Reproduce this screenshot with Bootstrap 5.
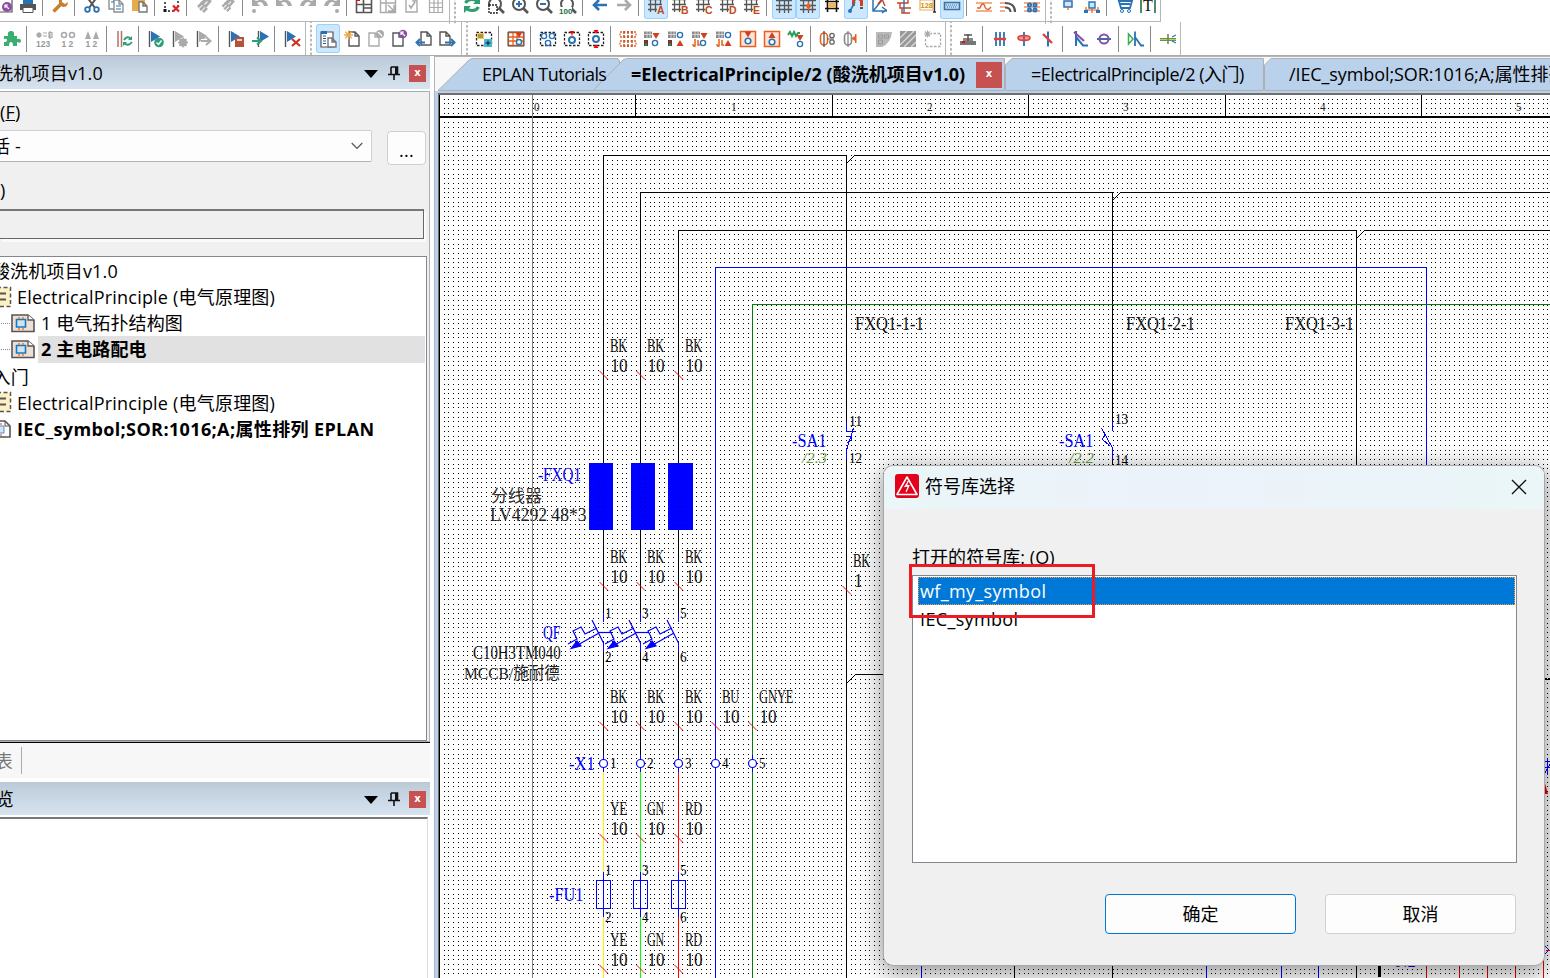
<!DOCTYPE html>
<html lang="zh-CN">
<head>
<meta charset="utf-8">
<title>EPLAN</title>
<meta name="viewport" content="width=device-width, initial-scale=1">
<link href="https://cdn.jsdelivr.net/npm/bootstrap@5.3.0/dist/css/bootstrap.min.css" rel="stylesheet">
<style>
body{font-family:"Open Sans","Noto Sans CJK SC",sans-serif;font-size:18px;line-height:26px;color:#000;background:#fff;letter-spacing:.2px}
.app{width:1550px;height:978px}
.bars{height:56px;border-bottom:1px solid #a9acab;background:#fff}
.tbar{height:34px;border-bottom:1px solid #b4b8b7;border-right:1px solid #b4b8b7;width:max-content}
.tbar.first{height:22px}
.tbar.first .cell,.tbar.first .tsep,.tbar.first .grip{margin-top:-10px}
.cell{width:24px;height:29px;margin-top:2px;padding-top:3px;flex:none}
.cell svg{display:block;width:24px;height:24px;overflow:visible}
.cell.on{background:#cce8ff;box-shadow:inset 0 0 0 1px #99d1ff;border-radius:3px}
.tsep{flex:none;height:26px;margin-top:4px;border-left:1px solid #8a8a8a;margin-left:2px;width:6px}
.grip{width:11px;margin-left:1px;border-left:1px solid #b4b8b7;height:34px;flex:none;background:radial-gradient(circle,#b5b5b5 1px,transparent 1.3px) 3px 2px/4px 4.6px repeat-y}
.main{height:922px}
.side{width:435px;border-right:1px solid #b4b4b4}
.ttl{height:33px;width:430px;background:linear-gradient(#bccad8,#d7e3f0)}
.clip{white-space:nowrap;overflow:hidden}
.xbtn{background:#c75050;color:#fff;font:bold 10px/15px "DejaVu Sans",sans-serif;width:17px;height:17px;text-align:center;letter-spacing:0;flex:none}
.pane{width:430px;background:#f0f0f0;border:1px solid #aaaeb2;border-left:0;margin-top:2px}
.combo{width:372px;height:32px;background:#fdfdfd;border:1px solid #d0d0d0;border-left:0;border-bottom-color:#b5b5b5;border-radius:0 2px 2px 0}
.dots{width:39px;height:34px;background:#fdfdfd;border:1px solid #cfcfcf;border-radius:4px;line-height:36px}
.sunk{width:424px;height:30px;border:1px solid #666;border-left:0;border-top:2px solid #777;box-shadow:2px 3px 0 #fafafa}
.tree{width:427px;height:485px;background:#fff;border:1px solid #828790;border-left:0}
.trow{height:26.4px;white-space:nowrap}
.trow svg{flex:none}
.tabs{height:37px;background:#f8f8f8}
.tabtxt{white-space:nowrap;height:34px;padding-top:5px;letter-spacing:.1px}
.tabtxt>*{flex:none}
.view{border-left:1px solid #6f6f6f;border-top:2px solid #6f6f6f;margin-left:3px;box-shadow:-3px 0 0 #b9d1ea;background:#fff}
.cad{display:block;box-shadow:inset 1px 0 0 #000}
.cad text{font-family:"Liberation Serif","Noto Sans CJK SC",serif;letter-spacing:0}
.dlg{left:884px;top:466px;width:660px;height:499px;background:#f0f0f0;border-radius:9px;box-shadow:0 0 0 1px #a8a8a8,0 5px 24px 2px rgba(0,0,0,.45)}
.dlghead{height:43px;background:linear-gradient(90deg,#eaf6f8,#ecf2fa 42%,#eaf6f8);border-radius:9px 9px 0 0}
.lst{width:605px;height:288px;background:#fff;border:1px solid #828790;margin-left:28px}
.pick{margin:1px 1px 0 5px;height:28px;background:#0078d7;color:#fff;outline:1px dotted #f0a040;outline-offset:-1px;padding:1px 0 0 2px}
.dbtn{width:191px;height:40px;border:1px solid #d0d0d0;background:#fdfdfd;border-radius:4px;font-size:18px;line-height:38px;text-align:center;letter-spacing:0}
.dbtn.ok{border-color:#0078d4}
.mark-red{left:25px;top:98px;width:186px;height:54px;border:3px solid #ed1c24}
</style>
</head>
<body class="overflow-hidden">
<div class="app d-flex flex-column overflow-hidden position-relative">
  <header class="bars overflow-hidden">
    <div class="tbar first d-flex" id="bar1"></div>
    <div class="tbar d-flex" id="bar2"></div>
  </header>
  <div class="main d-flex">
    <aside class="side d-flex flex-column flex-shrink-0">
      <div class="ttl d-flex align-items-center justify-content-between">
        <div class="clip d-flex justify-content-end" style="width:103px"><span>酸洗机项目v1.0</span></div>
        <div class="d-flex align-items-center tools"></div>
      </div>
      <div class="pane d-flex flex-column" style="height:651px">
        <div style="padding:7px 0 5px">(<u>F</u>)</div>
        <div class="d-flex">
          <div class="combo d-flex align-items-center justify-content-between pe-2">
            <div class="clip d-flex justify-content-end" style="width:21px"><span>激活 -</span></div>
            <svg width="12" height="8" viewBox="0 0 12 8"><path d="M.7 1 6 6.5 11.3 1" fill="none" stroke="#555" stroke-width="1.2"/></svg>
          </div>
          <div class="dots text-center" style="margin:1px 0 0 15px">...</div>
        </div>
        <div style="padding:12px 0 5px;height:44px">)</div>
        <div class="sunk mb-3 mt-0"></div>
        <div class="tree" style="margin-top:1px">
          <div class="trow d-flex"><div class="clip d-flex justify-content-end" style="width:118px;padding-top:1px"><span>酸洗机项目v1.0</span></div></div>
          <div class="trow d-flex align-items-center"><svg class="fold" width="17" height="22" viewBox="0 0 17 22"></svg><span>ElectricalPrinciple (电气原理图)</span></div>
          <div class="trow d-flex align-items-center"><svg class="leaf" width="41" height="22" viewBox="0 0 41 22"></svg><span style="letter-spacing:.1px">1 电气拓扑结构图</span></div>
          <div class="trow d-flex align-items-center"><svg class="leaf" width="38" height="22" viewBox="0 0 38 22"></svg><b class="flex-grow-1" style="background:#e1e1e1;padding:0 0 1px 3px;margin-right:1px;letter-spacing:.1px">2 主电路配电</b></div>
          <div class="trow d-flex"><div class="clip d-flex justify-content-end" style="width:29px;padding-top:1px"><span>入门</span></div></div>
          <div class="trow d-flex align-items-center"><svg class="fold" width="17" height="22" viewBox="0 0 17 22"></svg><span style="padding-top:1px">ElectricalPrinciple (电气原理图)</span></div>
          <div class="trow d-flex align-items-center"><svg width="17" height="22" viewBox="0 0 17 22"><path d="M-3 3H5L10 8V19H-3" fill="#fff" stroke="#555" stroke-width="1.6"/><path d="M5 3V8H10" fill="none" stroke="#555"/><path d="M0 8H4V15H0" fill="#cde4f5" stroke="#5a8fc0"/><path d="M0 6H2M0 17H2" stroke="#e33"/></svg><b style="letter-spacing:.38px">IEC_symbol;SOR:1016;A;属性排列 EPLAN</b></div>
        </div>
      </div>
      <div style="height:36px;width:430px;background:#f7f7f7;border-top:1px solid #000;color:#777" class="d-flex align-items-center">
        <div class="clip d-flex justify-content-end" style="width:13px"><span>列表</span></div>
        <div style="width:9px;height:27px;border-right:1px solid #aaa"></div>
      </div>
      <div class="ttl d-flex align-items-center justify-content-between flex-shrink-0" style="margin-top:4px">
        <div class="clip d-flex justify-content-end" style="width:14px"><span>预览</span></div>
        <div class="d-flex align-items-center tools"></div>
      </div>
      <div class="pane bg-white flex-grow-1" style="border-top:2px solid #777;border-bottom:0;width:428px;border-right-color:#ddd"></div>
    </aside>
    <section class="flex-grow-1 overflow-hidden">
      <div class="tabs position-relative">
        <svg class="position-absolute top-0 start-0" width="1115" height="37" viewBox="435 56 1115 37">
          <path d="M435 56.5H1550" stroke="#b4b4b4"/>
          <g fill="#b9d1ea" stroke="#b0b0b0">
            <path d="M438 90.5 469 60Q471 58.5 473 58.5H617Q619.500 58.500 619.500 63V90.500Z"/>
            <path d="M593 90.500 623 60Q625 58.500 628 58.500H1004.500V90.500Z"/>
            <path d="M1005.500 90.500V65L1012 58.500H1263.500V90.500Z"/>
            <path d="M1264.500 90.500V65L1271 58.500H1552V90.500Z"/>
          </g>
          <path d="M435 92H1550" stroke="#b9d1ea" stroke-width="2"/>
        </svg>
        <div class="tabtxt d-flex position-relative">
          <span style="width:149px;margin-left:47px;letter-spacing:-.58px">EPLAN Tutorials</span>
          <b style="width:345px;letter-spacing:.05px">=ElectricalPrinciple/2 (酸洗机项目v1.0)</b>
          <span class="xbtn" style="width:26px;height:26px;line-height:24px;margin-top:1px">x</span>
          <span style="margin-left:29px;width:258px;letter-spacing:-.48px">=ElectricalPrinciple/2 (入门)</span>
          <span style="letter-spacing:-.1px">/IEC_symbol;SOR:1016;A;属性排列</span>
        </div>
      </div>
      <div class="view">
        <svg class="cad" width="1111" height="883" viewBox="439 95 1111 883" id="cad"></svg>
      </div>
    </section>
  </div>

  <div class="dlg position-absolute">
    <div class="dlghead d-flex align-items-center">
      <svg width="24" height="24" viewBox="0 0 24 24" style="margin-left:11px;margin-right:6px;margin-top:-3px"><rect width="24" height="24" rx="3" fill="#e2001a"/><path d="M12 3 22 20.500H2Z" fill="none" stroke="#fff" stroke-width="1.600" stroke-linejoin="round"/><path d="M13.500 7 10 12.500 13.500 12 11 18M13 7 11.500 11.500 14 11.500 11.500 17" fill="none" stroke="#fff" stroke-width="1.100"/></svg>
      <span class="flex-grow-1" style="margin-top:-3px;letter-spacing:0">符号库选择</span>
      <svg width="16" height="16" viewBox="0 0 16 16" style="margin:-2px 17px 0 0"><path d="M1 1 15 15M15 1 1 15" stroke="#111" stroke-width="1.400"/></svg>
    </div>
    <div style="margin:35px 0 0 28px;height:31px;letter-spacing:.05px">打开的符号库: (O)</div>
    <div class="lst">
      <div class="pick" style="letter-spacing:.35px">wf_my_symbol</div>
      <div style="padding:1px 0 0 7px;letter-spacing:.35px">IEC_symbol</div>
    </div>
    <div class="d-flex" style="margin:31px 0 0 221px">
      <div class="dbtn ok">确定</div>
      <div class="dbtn" style="margin-left:29px">取消</div>
    </div>
    <div class="mark-red position-absolute"></div>
  </div>
</div>

<script>
// ---------- icon helpers (24 x 24 cells) ----------
const P=(d,s,w=1.5,f='none')=>`<path d="${d}" stroke="${s}" stroke-width="${w}" fill="${f}"/>`;
const F=(d,f)=>`<path d="${d}" fill="${f}"/>`;
const C=(x,y,r,s,w=1.5,f='none')=>`<circle cx="${x}" cy="${y}" r="${r}" stroke="${s}" stroke-width="${w}" fill="${f}"/>`;
const T=(x,y,t,c,z=8)=>`<text x="${x}" y="${y}" font-size="${z}" font-weight="700" font-family="Liberation Sans,sans-serif" letter-spacing="0" fill="${c}">${t}</text>`;
const D='#555',G='#aaa',B='#2a72b5',R='#d04020',O='#e8601c',N='#2e9e78',U='#8a4f9e',Y='#e8ab4c';
const doc=(x,y,c,w=10,h=13)=>P(`M${x} ${y}h${w-4}l4 4v${h-4}h${-w}zM${x+w-4} ${y}v4h4`,c,1.4,'#fff');
const box=c=>`<path d="M4.500 5.500h15v13h-15z" fill="none" stroke="${c}" stroke-width="1.300" stroke-dasharray="2.500 1.500"/>`;
const grid=P('M4 6.500H18M4 11.500H18M4 16.500H13M6.500 4V19M11.500 4V19M16.500 4V11',D,1.3);
const lens=P('M15 15 20 20',D,2.600)+C(11,11,6,D,2);
const undo=f=>`<g${f?' transform="matrix(-1 0 0 1 24 0)"':''}>`+F('M4 5V13H12L9 10Q14 7 16 13H20Q18 4 8 8Z',G)+'</g>';
const flag=(c,a)=>P('M5.500 4V20',D,1.4)+F('M7 4 16 9.500 7 15Z',c)+a;
const brush=P('M8 17 12 13M11 19 15 15M6 14 10 10',G,2.500)+F('M8 10 14 4 20 8 14 15Z',G)+F('M12 11 15 8 16 9 13 12Z','#eee');
const ring=(x,y)=>C(x,y,2.600,B,1.400);
const wave=P('M4 10H20M4 18H20',O,1.2);

const row1=[
 P('M4 4H20V19H4Z',D,1.2)+C(15,14,5,U,0,U)+P('M17 16 13 12M13 15V12H16','#fff',1.2),
 F('M7 6H17V11H7Z',B)+F('M4 11H20V17H4Z',D)+F('M7 15H17V20H7Z','#fff')+P('M7 15V19.500H17V15',D,1),'|',
 P('M5.500 18.500 13 11',' #c8812f',3.600)+F('M11 6 14 5V9L17 11 20 9Q20 14 15 14L11 12Z','#c8812f'),'|',
 P('M7 4 15 15M17 4 9 15',D,2)+C(7.500,16.500,2.300,B,1.800)+C(16.500,16.500,2.300,B,1.800),
 doc(5,4,'#8b9099',9,12)+doc(10,7,'#8b9099',9,12)+P('M7 9H10M12 13H17M12 16H17',B,1.2),
 F('M4 4H17V18H4Z',Y)+doc(11,9,'#777',8,10),'|',
 `<path d="M5 5H18V14M5 5V18H13" fill="none" stroke="#111" stroke-dasharray="2 2" stroke-width="1.400"/>`+F('M3.500 16h3v3h-3z','#111')+P('M13 12.500 19 18.500M19 12.500 13 18.500','#d22',2.200),'|',
 brush,`<g transform="translate(1 1) scale(.9)">${brush}</g>`,'|',
 undo(0)+C(6,18,2,G,0,G),undo(0),undo(1),undo(1)+C(17,18,2,G,0,G),'|',
 P('M4.500 5.500H19.500V19.500H4.500ZM4.500 11.500H19.500M11.500 5.500V19.500M11.500 15H19.500',D,1.6,'#fff')+F('M4 4H8V8H4Z','red'),
 P('M4.500 5.500H19.500V19.500H4.500ZM4.500 10H19.500M10 5.500V19.500M12 12 18 18M18 12V18H12',G,1.4),
 doc(6,4,G,11,15)+P('M9 12 11 15 15 9',G,1.6),
 P('M5.500 5.500H18.500V19.500H5.500ZM5.500 10H18.500M5.500 14.500H18.500M10 5.500V19.500M14 5.500V19.500',G,1.2),'#',
 P('M5.500 10A7 6 0 0 1 18 9.500M18.500 14A7 6 0 0 1 6 14.500','#2f9e70',3)+F('M13 11H20V4ZM11 13H4V20Z','#2f9e70'),
 lens+P('M5 12H13V20H5Z','#222',1.4,'#fff').replace('/>',' stroke-dasharray="2 1"/>'),
 lens+P('M8 11H14M11 8V14',B,2),lens+P('M8 11H14',B,2),lens+F('M3 14H16V21H3Z','#fff')+T(3,20.500,'100','#207040',8),'|',
 P('M19 12H7M11 7 6 12 11 17',B,2.600),P('M5 12H17M13 7 18 12 13 17',G,2.600),'|',
 ...['A','B','C','D','E'].map((l,i)=>[grid+T(13,20.500,l,'#c04a20',10.5),i==0]),'|',
 [P('M4 7.500H20M4 12.500H20M4 16.500H20M7.500 4V20M12.500 4V20M16.500 4V20',D,1.3),1],
 [P('M4 7.500H20M4 12.500H20M4 16.500H20M7.500 4V20M12.500 4V20M16.500 4V20',D,1.3)+C(12.500,13,2,O,1,O)+P('M12.500 9V17',O,1),1],
 P('M7.500 4V19M16.500 4V19M5 8.500H19M5 15.500H19','#111',1.6)+F('M8.500 9.500h7v5h-7z','#f3b850'),
 [P('M9.5 13V8Q13 2 17.5 8V13',R,3)+P('M6 18 11 9',B,1.6)+C(6,18,2,B,0,B)+P('M16 15H19',D,2),1],
 P('M5 5V18H19M6 17 14 7M14 14 18 17 14 20',B,1.5)+P('M10 11 14 6 17 13',R,1.4),
 P('M8 6H16V10H5M8 10V15H19M10 15V20H18',R,1.4)+P('M12 6V20',B,1.4),
 P('M4 7H17V17H4Z','#e8b35a',1.2,'#fff')+T(4.500,15,'128','#d98a10',7.500)+P('M17 5H20M18.500 5V19M17 19H20','#333',1.3),
 [P('M4.500 9.500H19.500V16.500H4.500Z','#3f6f9f',1.600,'#bcdcf6')+P('M6 12H18M7 14H17','#3f6f9f',1).replace('/>',' stroke-dasharray="1 1"/>'),1],'|',
 P('M5 15H8Q11 7 13 14Q15 19 19 14',O,1.4)+wave,P('M4 10H9M4 14H9M4 18H9',O,1.2)+P('M9 10Q19 10 19 19M9 14.500Q14.500 14.500 14.500 19',D,2.2),P('M4 10H20M4 14H20M4 18H20',O,1.2)+C(9.500,12,1.5,B,2)+C(15,12,1.5,B,2)+C(9.500,17,1.5,B,2)+C(15,17,1.5,B,2),'#',
 P('M8 8H16V14H8Z',B,1.5,'#cfe6f8')+P('M12 5V8M12 14V17',O,1.3),
 P('M9 9H15V15H9Z',B,1.4,'#cfe6f8')+P('M5 7V4M19 7V4M12 15V20M6 14V17H18V14',O,1.2)+F('M4 17h4v3h-4zM16 17h4v3h-4z',B),'|',
 P('M4 5H6L9 15H18L20 8H7M8 11H18M9 6H19',B,1.8)+C(10,18,1.500,B,1)+C(17,18,1.500,B,1),
 P('M5 4V20M19 4V20','#207040',1.6)+`<text x="7" y="18" font-size="16" letter-spacing="0" font-family="Liberation Serif" fill="#111">T</text>`
];
const tri=(x,y,u)=>F(u?`M${x-3.500} ${y+3}h7l-3.500 -6z`:`M${x-3.500} ${y-3}h7l-3.500 6z`,R);
const quad=a=>F('M4 4.500H12V11H4Z','#8a8a8a')+P('M4 7.500H12M7 4V11M10 4V11','#fff',.6)+(a?P('M7 12V19Q5 20 5 17M10 13V18H12',O,1.500):F('M4 13h4v6h-4z','#444')+F('M5 14h2v2h-2z','red')+F('M5 16.500h2v2h-2z','#2a4'));
const row2=[
 F('M4 9H8Q7 4 11 4T14 9H17V12Q21 11 21 14T17 15V19H13Q13 15 11 15T9 19H4V15Q7 15 7 13T4 12Z','#3aae72'),'|',
 C(7,8,2.200,G,1,G)+P('M11 6H15M11 9H15M18 4V12M17 5.500h3v5h-3z',G,1.2)+T(4,20,'123','#999',8.500),
 C(8,8,2.500,G,1.600)+C(16,8,2.500,G,1.600)+T(5.500,20,'1 2','#999',8.500),F('M5 12 8 4 11 12ZM13 12 16 4 19 12Z',G)+T(5.500,20,'1 2','#999',8.500),'|',
 P('M6 4V20M9.500 4V20','#b5706a',1.500)+P('M12 13Q15 8 19 12M20 15Q16 20 12 16',N,2)+F('M16 13H20V9ZM15 15H11V19Z',N),'|',
 flag(B,C(15,15.500,4.800,N,0,N)+P('M12.500 15.500 14.500 17.500 17.500 13.500','#fff',1.400)),
 flag(G,C(15,15.500,3,G,2,G)+P('M10 15.500H20M15 10.500V20.500M11.500 12 18.500 19M18.500 12 11.500 19',G,1.5)),flag(G,P('M9 14H18M14 10 18.500 14 14 18','#fff',4)+P('M9 14H18M14 10 18.500 14 14 18',G,2)),'|',
 flag(B,F('M11 10H20V20H11Z','#b5523c')+P('M13 13H18','#fff',1.500)),`<g transform="matrix(1 0 0 1 5 0)">${flag(B,'')}</g>`+P('M4 14H12M9 10.500 13 14 9 17.500',N,2),'|',
 flag(B,P('M12 12 20 19M20 12 12 19','#cc3020',2.200)),'#',
 [P('M5 5H17V20H5Z','#555',1.200,'#fff')+F('M5 4H11V7H5Z',B)+P('M7 9H10M7 11.500H10M7 14H10M7 16.500H10','#2a5a95',1.2)+doc(12,11,'#777',8,9),1],
 doc(9,5,D,10,14)+P('M4 8H13M8.500 3.500V12.500M5.300 4.800 11.700 11.200M11.700 4.800 5.300 11.200',Y,1.3),
 doc(5,6,G,10,13)+C(16,7,4,G,0,G)+P('M14 5 18 9','#fff',1.2),
 doc(5,6,D,10,13)+C(15,7,4.200,U,0,U)+P('M17 9 13 5M13 8V5H16','#fff',1.2),
 doc(9,5,D,10,13)+P('M13 15.500H5M8 12 4.500 15.500 8 19',B,2),doc(4,5,D,10,13)+P('M9 15.500H18M15 12 18.500 15.500 15 19',B,2),'#',
 box('#222')+F('M5 6h7v6h-7z','#f6c950')+P('M6 8H11M6 10H11','#444',.8)+F('M12 12h8v8h-8z','#45b9c9')+P('M13.500 16H18.500M16 13.500V18.500','#114',1),'|',
 P('M4.500 5.500H19.500V18.500H4.500ZM4.500 10H19.500M4.500 14H19.500M9 5.500V18.500M13 5.500V18.500',O,1.300)+P('M4 5H20V19H4Z',D,1)+tri(15,8)+C(15,15,2.600,B,1.500,'#fff'),'|',
 box('#222')+ring(8,9)+ring(16,9)+ring(12,16),box('#222')+C(12,13,3,B,2)+F('M9.500 4h5l-2.500 4z','red')+P('M12 6V10',O,1),
 box('#222')+C(12,12,3,B,2)+F('M9.500 3h5l-2.500 4zM9.500 21h5l-2.500 -4z','red'),'|',
 `<g fill="none" stroke="${O}" stroke-width="1.300"><path stroke-dasharray="2 1.500" d="M4 5H20V10H4ZM4 14H20V19H4Z"/><path d="M8 4V11M12 4V11M16 4V11M8 13V20M12 13V20M16 13V20" stroke="#b5441a" stroke-dasharray="3 1"/></g>`,
 quad(0)+tri(16,9)+ring(15,16),quad(0)+ring(16,8)+tri(16,16,1),quad(1)+tri(16,9)+ring(15,16),quad(1)+ring(16,8)+tri(16,16,1),
 P('M4.500 4.500H19.500V19.500H4.500Z',O,1.500,'#fbe3d8')+tri(12,7.500)+C(12,14,2.800,B,1.600,'#fff'),P('M4.500 4.500H19.500V19.500H4.500Z',O,1.500,'#fbe3d8')+tri(12,8,1)+C(12,15,2.800,B,1.600,'#fff'),
 P('M4 8 6 5 8 9 10 5 12 9 14 6H16','#2a9e58',2)+tri(16,11)+ring(16,17),'|',
 `<rect x="4.500" y="6" width="7" height="12" rx="3.500" fill="none" stroke="${O}" stroke-width="1.600"/>`+P('M8 4V20','#555',1.3)+C(16,8.500,2.200,'#666',1.300)+C(16,15,2.200,'#666',1.300)+P('M11 12H18','#666',1),
 `<rect x="4.500" y="6" width="7" height="12" rx="3.500" fill="none" stroke="#888" stroke-width="1.600"/>`+P('M8 4V20','#888',1.300)+F('M12 11 15 9V7H16.5V16H15V14L12 12Z',O),'|',
 F('M4 5H20Q19 16 10 20H4Z','#b9b9b9')+P('M6.500 8H10.500V11H6.500ZM12.500 8H16.500V11H12.500ZM6.500 13H10.500V17H6.500Z','#999',1),
 F('M4 4H20V20H4Z','#999')+P('M4 11 11 4M4 18 18 4M8 20 20 8M15 20 20 15','#ddd',1.200),
 `<g transform="translate(1 1)">${box(G)}</g>`+F('M3 3h8v8h-8z','#fff')+P('M4 7H11M7.500 3.500V10.500M5 4.500 10 9.500M10 4.500 5 9.500',G,1.2),'#',
 F('M4 14H20V18H4Z','#777')+F('M7 11H17V14H7Z','#888')+P('M12 7V14M8 8H16',D,1.500)+F('M6 14h3v2h-3z','red'),'|',
 P('M8 5V19M12 5V19M16 5V19',B,1.800)+P('M6 12H18','#e0403a',2.400),
 P('M12 5V19',B,1.800)+`<ellipse cx="12" cy="11" rx="6" ry="2.500" fill="#e0403a88" stroke="#e0403a" stroke-width="1.600"/>`,
 P('M12 4.500V19.500',B,2)+P('M7 7 16 16','#e0403a',2.400),'|',
 P('M8 4V19M8 10 15 18.500H20',B,2)+P('M6 5 16 14',U,2.200),P('M5 12H19',B,2)+C(12,12,4.500,U,2),'|',
 P('M4.500 7V17L9 12Z','#3aae52',1.500)+P('M11 4.500V19M11 10 17 18.500H20',B,1.800),'|',
 P('M4 12.500H20',N,3)+P('M4 12.500H20','#e8c020',1.2)+P('M12 7V17','#8a7a5a',1.600)+P('M16 10 20 8M16 14 20 16',B,1.2)
];
const build=(id,list,lead)=>{document.getElementById(id).innerHTML=list.map((it,i)=>{
  if(it==='|')return '<div class="tsep"></div>';
  if(it==='#')return '<div class="grip"></div>';
  const on=Array.isArray(it)&&it[1],s=Array.isArray(it)?it[0]:it;
  return `<div class="cell${on?' on':''}"${i==0&&lead?' style="margin-left:'+lead+'px"':''}><svg viewBox="0 0 24 24">${s}</svg></div>`}).join('')};
build('bar1',row1,-8);build('bar2',row2,0);

document.querySelectorAll('.tools').forEach(e=>e.innerHTML='<svg width="14" height="8" viewBox="0 0 14 8" style="margin-top:2px"><path d="M0 0H14L7 8Z"/></svg><svg width="12" height="14" viewBox="0 0 12 14" style="margin:1px 9px 0 10px"><path d="M3 1H9.500V8M3 1V8M0 8.500H12M6 9V14" fill="none" stroke="#111" stroke-width="1.600"/><path d="M8 1V8" stroke="#111" stroke-width="2"/></svg><div class="xbtn" style="margin:1px 4px 0 0">x</div>');
document.querySelectorAll('.fold').forEach(e=>e.innerHTML='<path d="M-3 1.500H10.500V20.500H-3Z" fill="#fdf0c4" stroke="#555" stroke-width="1.500" stroke-dasharray="4 2.500"/><path d="M0 7.500H6M0 13.500H6" stroke="#555" stroke-width="2"/>');
document.querySelectorAll('.leaf').forEach(e=>e.innerHTML='<path d="M1 11.500H11" stroke="#888" stroke-dasharray="1 1"/><path d="M12 3H28L34 8V19.500H12Z" fill="#eedfd6" stroke="#555" stroke-width="1.600"/><path d="M28 3V8H34" fill="#fff" stroke="#555" stroke-width="1.300"/><path d="M16.500 7.500H25.500V15H16.500Z" fill="#cde4f5" stroke="#1a78b8" stroke-width="1.600"/><path d="M19 5V7M23 5V7M19 16V18M23 16V18" stroke="#f07020" stroke-width="1.400"/>');

// ---------- schematic ----------
let s='';
const L=(d,c='#000',w=1,m='')=>s+=`<path d="${d}" fill="none" stroke="${c}" stroke-width="${w}" shape-rendering="crispEdges" ${m}/>`;
const W=t=>[...t].reduce((a,ch)=>a+(ch.charCodeAt(0)>255?17:8.600),0);
const X=(x,y,t,c='#111',z=18,k=1,more='')=>s+=`<text x="${x}" y="${y}" font-size="${z}" fill="${c}" textLength="${(W(t)*k).toFixed(1)}" lengthAdjust="spacingAndGlyphs" ${more}>${t}</text>`;
// small pin numbers
const S=(x,y,t)=>X(x,y,t,'#000',14,.77);
// dot grid
const px=4.6765;let row='';
for(let i=0;i<238;i++)row+=`M${Math.floor(444.3+i*px)} .5h1`;
s+=`<defs><path id="dotrow" d="${row}" stroke="#000" shape-rendering="crispEdges"/></defs>`;
for(let j=0;j<189;j++){const y=Math.floor(99.300+j*px);if(y!==117&&y!==118)s+=`<use href="#dotrow" y="${y}"/>`}
// frame
L('M440 117H1551','#000',2);[635,832,1028,1225,1421].forEach(x=>L(`M${x}.500 95V117`));
[534,731,927,1123,1320,1516].forEach((x,i)=>X(x,111,''+i,'#222',12,.65));
const blue='#0000ff';
const xs=[603,640,678],tops=[155,192,230],ends=[846,1112,1356],cols=['#ffee00','#00ff00','#ff0000'];
xs.forEach((x,i)=>{
  L(`M${x}.500 613V${tops[i]}.500H${ends[i]}.500V${i<2?422:978}`);
  L(`M${ends[i]+9} ${tops[i]}.500H1551`);
  s+=`<path d="M${ends[i]+1} ${tops[i]+8}l8 -8" stroke="#000"/>`;
  L(`M${x}.500 613V622M${x}.500 642V652`,blue);
  L(`M${x}.500 652V757`);L(`M${x}.500 771V978`,cols[i]);
});
L('M846.500 460V978M855 674.500H890M1112.500 460V978');s+='<path d="M847 683l8 -8" stroke="#000"/>';
L('M715.500 978V267.500H1426.500V470',blue);L('M752.500 978V304.500H1551','#008000');
[603,640,678,715,752].forEach((x,i)=>{L(`M${x}.500 755V772`,blue);
  s+=`<circle cx="${x}.500" cy="763.500" r="4" fill="#fff" stroke="${blue}" stroke-width="1.200"/>`;S(x+7,768,''+(i+1))});
// distributor blocks
[[589,24],[631,24],[668,25]].forEach(([x,w])=>{s+=`<path d="M${x} 463h${w}v67h${-w}z" fill="${blue}"/>`;L(`M${x+9}.500 478V527M${x+14}.500 478V527`,'#0000a0',1,'stroke-dasharray="1 3.677"')});
// wire labels and ticks
const tick=(x,y)=>s+=`<path d="M${x-3.500} ${y-3.500}L${x+5} ${y+5}" stroke="#ff0000"/>`;
[[352,['BK','BK','BK']],[563,['BK','BK','BK']],[703,['BK','BK','BK','BU','GNYE']],[815,['YE','GN','RD']],[946,['YE','GN','RD']]].forEach(([y,a])=>
 a.forEach((t,i)=>{const x=[610,647,685,722,759][i];X(x,y,t);X(x+.5,y+20,'10');tick(x-7,y+22.5)}));
X(853,567,'BK');X(854,587,'1');tick(846,589.500);
X(855,330,'FXQ1-1-1');X(1126,330,'FXQ1-2-1');X(1285,330,'FXQ1-3-1');
X(538,481,'-FXQ1',blue);X(491,502,'分线器','#333',17);X(490,521,'LV4292 48*3','#222',18,1.02);
X(543,639,'QF',blue);X(473,659,'C10H3TM040','#111',18,1.02);X(464,679,'MCCB/施耐德','#222',17,1.02);
X(569,770,'-X1',blue);X(549,901,'-FU1',blue);
X(792,447,'-SA1',blue);X(1059,447,'-SA1',blue);
X(802,463,'/2.3','#6a9a3a',14,.72,'font-style="italic"');X(1069,463,'/2.2','#6a9a3a',14,.72,'font-style="italic"');
S(849,426,'11');S(849,463,'12');S(1115,424,'13');S(1115,465,'14');
// contacts
L('M846.500 422V431.500H855M853.500 428 847 448.500M846.500 448V460M847 436H851V440L847 443M1112.500 421V431M1101.500 428 1112.500 448V460M1106 434 1102 439 1110 446',blue);
// breaker poles and fuses
xs.forEach((x,i)=>{const dx=x-603,n=2*i+1;
 s+=`<g fill="none" stroke="${blue}" stroke-width="1.200" transform="translate(${dx} 0)"><path d="M592 620 603.500 643M599 633 575 646.500M568 644 577 639 573 631 581 627 585 634 597 628"/><path d="M571 648.500 577 641 581 646Z" fill="${blue}"/><path d="M598 632.500H612" ${i>1?'stroke="none"':''}/></g>`;
 S(x+2,618,''+n);S(x+2,662,''+(n+1));
 L(`M${x-7+.5} 880.500H${x+7}.500V908.500H${x-7+.5}ZM${x}.500 872V917`,blue);
 S(x+2,875,''+n);S(x+2,922,''+(n+1));
});
L('M532.500 95V980','#808080');
// parts of the sheet that continue past the dialog
L('M921.500 960V980M1206.500 960V980M1281.500 960V980M1318.500 960V980',blue);L('M1014.500 960V980');
L('M1426.500 960V980M1459.500 960V980M1487.500 960V980M1515.500 960V980M1543.500 960V980','#e00000');
L('M1379.500 960V977','#000',3);X(1390,967,'-N2',blue);
L('M1544 679H1547M1548 679H1551','#000',2);L('M1545 761H1550M1547 758V775M1545 767H1550M1545 773 1550 764',blue);s+='<path d="M1544 780 1548 794H1544Z" fill="#e00"/>';L('M1545 946 1549 950 1545 954',blue);L('M1546 950.500H1551','#e00');
document.getElementById('cad').innerHTML=s;
</script>
<script src="https://cdn.jsdelivr.net/npm/bootstrap@5.3.0/dist/js/bootstrap.bundle.min.js"></script>
</body>
</html>
